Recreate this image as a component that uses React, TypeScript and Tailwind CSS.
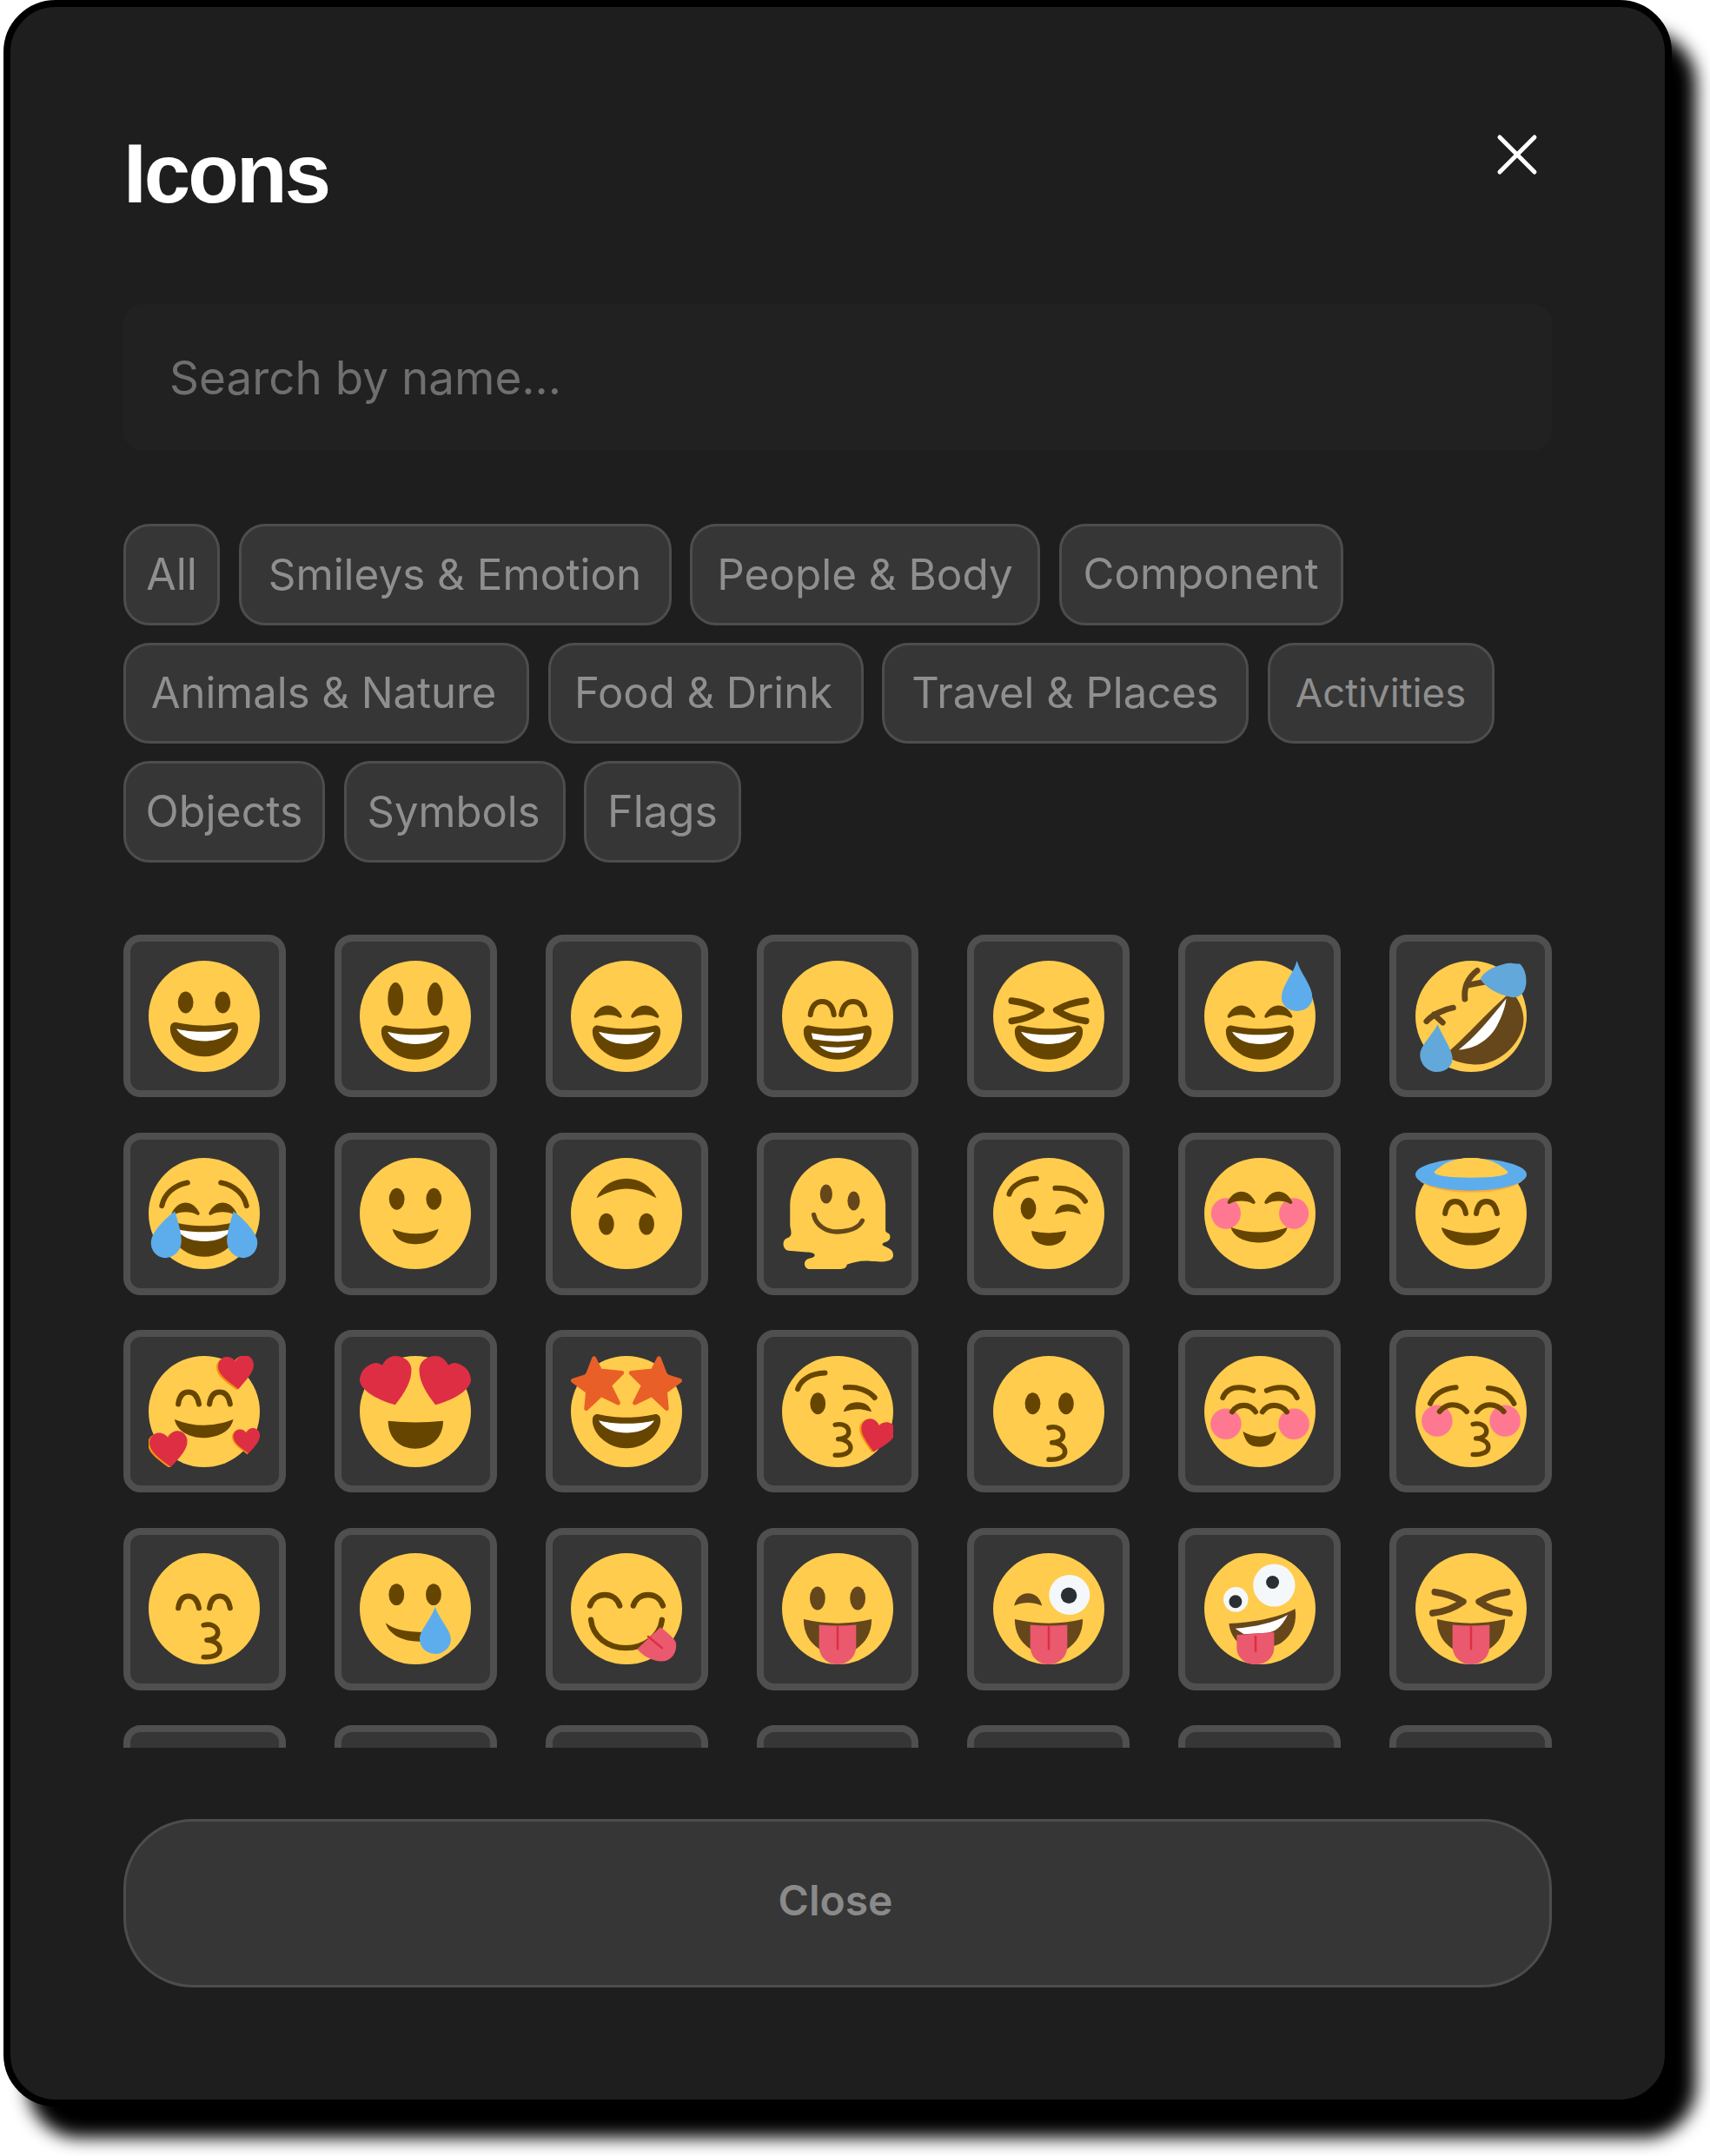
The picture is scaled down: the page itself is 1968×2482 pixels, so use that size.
import { X } from 'lucide-react';
import type { ReactNode } from 'react';

const BROWN = '#664500';
const DARK = '#65471B';
const RED = '#DD2E44';
const BLUE = '#5DADEC';
const PINK = '#FF7892';
const TONGUE = '#EA596E';

const MOUTH =
  'M18 21c-3.623 0-6.027-.422-9-1-.679-.131-2 0-2 2 0 4 4.595 9 11 9 6.404 0 11-5 11-9 0-2-1.321-2.132-2-2-2.973.578-5.377 1-9 1z';
const TEETH = 'M9 22s3 1 9 1 9-1 9-1-2 4-9 4-9-4-9-4z';
const SMILE_EYES =
  'M28.457 17.797c-.06-.135-1.499-3.297-4.457-3.297-2.957 0-4.397 3.162-4.457 3.297-.092.207-.032.449.145.591.175.142.426.147.61.014.012-.009 1.262-.902 3.702-.902 2.426 0 3.674.881 3.702.901.088.066.194.099.298.099.11 0 .221-.037.312-.109.177-.142.238-.386.145-.594zm-12 0c-.06-.135-1.499-3.297-4.457-3.297-2.957 0-4.397 3.162-4.457 3.297-.092.207-.032.449.144.591.176.142.427.147.61.014.013-.009 1.262-.902 3.703-.902 2.426 0 3.674.881 3.702.901.088.066.194.099.298.099.11 0 .221-.037.312-.109.178-.142.237-.386.145-.594z';
const HEART =
  'M12 21C5 15 0 11 0 6 0 2.5 3 0 6 0c2.5 0 5 1.5 6 3.5C13 1.5 15.5 0 18 0c3 0 6 2.5 6 6 0 5-5 9-12 15z';

function Face() {
  return <circle cx="18" cy="18" r="18" fill="#FFCC4D" />;
}

function Eyes({ l = 12, r = 24, y = 13.5, rx = 2.5, ry = 3.5, c = BROWN }) {
  return (
    <>
      <ellipse cx={l} cy={y} rx={rx} ry={ry} fill={c} />
      <ellipse cx={r} cy={y} rx={rx} ry={ry} fill={c} />
    </>
  );
}

function Line({ d, w = 1.7, c = BROWN }: { d: string; w?: number; c?: string }) {
  return <path d={d} fill="none" stroke={c} strokeWidth={w} strokeLinecap="round" strokeLinejoin="round" />;
}

function Smile({ y = 0, teeth = true }: { y?: number; teeth?: boolean }) {
  return (
    <g transform={`translate(0 ${y})`}>
      <path d={MOUTH} fill={BROWN} />
      {teeth && <path d={TEETH} fill="#fff" />}
    </g>
  );
}

function SmileEyes({ y = 0 }: { y?: number }) {
  return <path d={SMILE_EYES} fill={BROWN} transform={`translate(0 ${y})`} />;
}

function ArchEyes({ y = 0 }: { y?: number }) {
  return (
    <g transform={`translate(0 ${y})`}>
      <Line d="M9.6 17.3C10 14.4 11.4 13.4 12.9 13.4s2.9 1 3.4 3.9" />
      <Line d="M19.7 17.3c.4-2.9 1.8-3.9 3.3-3.9s2.9 1 3.4 3.9" />
    </g>
  );
}

function Crescent({ x1, x2, y, h }: { x1: number; x2: number; y: number; h: number }) {
  const mid = (x1 + x2) / 2;
  const dip = h * 0.4;
  return <path d={`M${x1} ${y}Q${mid} ${y + dip * 1.6} ${x2} ${y}C${x2 - 1} ${y + h * 0.8} ${mid + 3} ${y + h} ${mid} ${y + h}S${x1 + 1} ${y + h * 0.8} ${x1} ${y}z`} fill={BROWN} />;
}

function Lips({ x = 18, y = 22, s = 1 }: { x?: number; y?: number; s?: number }) {
  return (
    <g transform={`translate(${x} ${y}) scale(${s})`}>
      <Line d="M0 0.4C2.5-.3 4.4 1 4.4 2.7 4.4 4.3 2.5 5 1 5 2.7 5 5 6 5 7.8 5 9.6 2.5 10.4 0 10.2" w={1.5} />
    </g>
  );
}

function Cross({ left = [6, 13, 15.5, 16, 6, 19.5], w = 2.2, c = BROWN }: { left?: number[]; w?: number; c?: string }) {
  const [a, b, m, d, e, f] = left;
  return (
    <>
      <Line d={`M${a} ${b}Q${(a + m) / 2 + 0.6} ${b + 0.6} ${m} ${d}Q${(e + m) / 2 + 0.6} ${f - 0.6} ${e} ${f}`} w={w} c={c} />
      <Line d={`M${36 - a} ${b}Q${36 - (a + m) / 2 - 0.6} ${b + 0.6} ${36 - m} ${d}Q${36 - (e + m) / 2 - 0.6} ${f - 0.6} ${36 - e} ${f}`} w={w} c={c} />
    </>
  );
}

function Heart({ x, y, s, r = 0 }: { x: number; y: number; s: number; r?: number }) {
  return (
    <g transform={`translate(${x} ${y}) rotate(${r}) scale(${s} ${s * 1.07})`}>
      <path d={HEART} fill="#F4900C" transform="translate(-1.2 .5)" />
      <path d={HEART} fill={RED} />
    </g>
  );
}

function TongueMouth({ x = 12, w = 12 }: { x?: number; w?: number }) {
  return (
    <>
      <path d="M7 21.4Q18 24 29 21.4C29 26 27 29 24 31L12 31C9 29 7 26 7 21.4z" fill={DARK} />
      <path d={`M${x} 23.2Q${x + w / 2} 23.8 ${x + w} 23.2V30C${x + w} 33.8 ${x + w - 3} 36 ${x + w / 2} 36S${x} 33.8 ${x} 30z`} fill={TONGUE} />
      <Line d={`M${x + w / 2} 24V31`} w={0.7} c={RED} />
    </>
  );
}

function Drop({ d, c = BLUE }: { d: string; c?: string }) {
  return <path d={d} fill={c} />;
}

const emojis: ReactNode[] = [
  // row 1
  <><Face /><Eyes /><Smile /></>,
  <><Face /><Eyes l={11.6} r={24.4} y={12.4} ry={5.4} /><Smile y={1} /></>,
  <><Face /><SmileEyes /><Smile y={1} /></>,
  <>
    <Face />
    <Line d="M9.2 17.5C9.6 14.4 11.2 13.2 13 13.2s3.4 1.2 3.8 4.3" />
    <Line d="M19.2 17.5c.4-3.1 2-4.3 3.8-4.3s3.4 1.2 3.8 4.3" />
    <path transform="translate(0 1)" d={MOUTH} fill={BROWN} />
    <path d="M9.5 23.4Q18 25.2 26.5 23.4L26 25.4Q18 27 10 25.4z" fill="#fff" />
    <path d="M12 27.5Q18 28.6 24 27.5Q22 29.8 18 29.8T12 27.5z" fill="#fff" />
  </>,
  <><Face /><Cross /><Smile y={1} /></>,
  <>
    <Face />
    <SmileEyes />
    <Smile y={1} />
    <Drop d="M30 0c1 4 5 8 5 12a5 4.3 0 0 1-10 0c0-4 4-8 5-12z" />
  </>,
  <>
    <Face />
    <path d="M32 11C35 15 35.5 19 34.6 22 33 28 26 34 19 33.6 15.5 33.4 12 32.4 10.5 31L11.4 28.8C15 26 22 18 29.4 11.4z" fill={DARK} />
    <path d="M29.4 12.2C29 16 27 20 26 21.7 24 25 20 28.5 14 28.8 19 25 24 19 29.4 12.2z" fill="#fff" />
    <Line d="M20 3.2C17 5.5 15.6 8.5 16 12.4M16.5 8L24 6.5" w={1.9} c={DARK} />
    <Line d="M12.2 15.2C9 15.8 5.5 17.5 3.6 19.6M6 17.4L8.8 20" w={1.9} c={DARK} />
    <path d="M21 6C22 3.5 25 2 29 1c1-.5 3 0 4.8 0C36 3 36.2 7 35.5 9c-.8 2.5-3 3.2-5 2.7C27 11 23 9 21 6z" fill="#62A8DB" />
    <path d="M7.2 20.6C8 23 12 29 12 31.5 12 34.5 9.5 36 7 36 4 36 1.5 33.5 1.5 30.5 1.5 27.5 5.5 24 7.2 20.6z" fill="#62A8DB" />
  </>,
  // row 2
  <>
    <Face />
    <Line d="M4.3 15.5C5 12 8 8.8 12.6 8" />
    <Line d="M31.7 15.5C31 12 28 8.8 23.4 8" />
    <SmileEyes />
    <path transform="translate(0 1)" d={MOUTH} fill={BROWN} />
    <path transform="translate(0 1)" d={TEETH} fill="#fff" />
    <Drop d="M8.5 17.3C10 22 11 26 10.5 28 10 31 7 32.8 4.5 32.3 1.5 31.5.2 28.5 1 26 2 23 6 19 8.5 17.3z" />
    <g transform="matrix(-1 0 0 1 36 0)">
      <Drop d="M8.5 17.3C10 22 11 26 10.5 28 10 31 7 32.8 4.5 32.3 1.5 31.5.2 28.5 1 26 2 23 6 19 8.5 17.3z" />
    </g>
  </>,
  <><Face /><Eyes y={13.3} /><Crescent x1={10.6} x2={25.5} y={23} h={4.9} /></>,
  <>
    <Face />
    <path d="M8.3 13C10 9 14 6.7 18 6.7S26 9 27.7 13C24 11 21 10 18 10S12 11 8.3 13z" fill={BROWN} />
    <Eyes l={11.5} r={24.5} y={21.4} />
  </>,
  <>
    <path
      d="M18 0C26 0 33 7 33.5 15L33.5 23.5C33.5 24.5 35 24 35 25.5 35 27.5 32.5 27 32.5 28 32.5 29 36 28.8 36 31.5 36 33.5 33 33.8 30 33.5 26 33 24 33.5 21 34.5 21 36 19 36 18 36L9 36C7 36 6.5 33 9 32.5 11.5 32 11 30.5 8 30.5L2 30C0 29.5 0 26.5 1.5 26 3.5 25.5 3 24 2.6 22L2.6 15C3 7 10 0 18 0z"
      fill="#FFCC4D"
    />
    <ellipse cx="14.3" cy="11.7" rx="2" ry="3.1" fill={DARK} />
    <ellipse cx="23.2" cy="13.9" rx="2" ry="3.1" fill={DARK} />
    <Line d="M10.3 18.4C11 22 14.5 24 18 23.9 22 23.8 25 22.5 26 20.3" w={1.5} c={DARK} />
  </>,
  <>
    <Face />
    <Line d="M5.2 11.7C6 9 9.5 6.8 14 6.7" />
    <ellipse cx="11.4" cy="16.4" rx="2.5" ry="3.5" fill={BROWN} />
    <Line d="M20.1 9.8C24 9.6 28 11 29.8 14" />
    <path d="M20 18.3C20.6 16 22 15 24.2 15S27.8 16 28.4 18.3C26.5 17.6 25 17.3 24.2 17.3S21.9 17.6 20 18.3z" fill={BROWN} />
    <path d="M12.4 23.6Q18 25 23.6 23.6C23.5 26.5 21 28.4 18 28.4S12.5 26.5 12.4 23.6z" fill={BROWN} />
  </>,
  <>
    <Face />
    <ellipse cx="7" cy="18" rx="4.8" ry="5" fill={PINK} />
    <ellipse cx="29" cy="18" rx="4.8" ry="5" fill={PINK} />
    <SmileEyes y={-3.6} />
    <Crescent x1={8.6} x2={26.9} y={22.5} h={4.9} />
  </>,
  <>
    <Face />
    <ellipse cx="18" cy="6.2" rx="17" ry="5" fill="#FFAC33" />
    <ellipse cx="18" cy="5.4" rx="18" ry="5.2" fill={BLUE} />
    <path d="M6 4.6C8.5 2 12 0 18 0S27.5 2 30 4.6C29.5 6 24 6.4 18 6.4S6.5 6 6 4.6z" fill="#FFCC4D" />
    <ArchEyes y={.7} />
    <Crescent x1={8.4} x2={27.4} y={22.5} h={5.8} />
  </>,
  // row 3
  <>
    <Face />
    <ArchEyes y={-1.7} />
    <Crescent x1={8.4} x2={27.4} y={20.5} h={6} />
    <Heart x={22.2} y={0.6} s={0.48} r={-6} />
    <Heart x={0} y={25.2} s={0.51} r={-6} />
    <Heart x={27.2} y={24} s={0.36} r={-6} />
  </>,
  <>
    <Face />
    <path d="M9.2 21Q18 22 27 21C27 27 22.5 30 18 30S9.2 27 9.2 21z" fill={BROWN} />
    <path d="M16.7 4C16.4 1.5 14 0 11.5 0 9.5 0 8 1.5 7.3 3 6 2 4.5 2 3 3 1 4 0 6 0 8 .5 11 5 14 11.5 15.8 14.5 12 17 8 16.7 4z" fill={RED} />
    <path d="M16.7 4C16.4 1.5 14 0 11.5 0 9.5 0 8 1.5 7.3 3 6 2 4.5 2 3 3 1 4 0 6 0 8 .5 11 5 14 11.5 15.8 14.5 12 17 8 16.7 4z" fill={RED} transform="matrix(-1 0 0 1 36 0)" />
  </>,
  <>
    <Face />
    <Smile y={-1.1} />
    <path d="M7.5.8L9.5 4.8 16.5 5.5 12.5 9.5 15.3 15.2 9.8 12.5 5 17 5.5 11.5.7 8 5.3 6.5z" fill="#E95F28" stroke="#E95F28" strokeWidth="1.4" strokeLinejoin="round" />
    <path d="M7.5.8L9.5 4.8 16.5 5.5 12.5 9.5 15.3 15.2 9.8 12.5 5 17 5.5 11.5.7 8 5.3 6.5z" fill="#E95F28" stroke="#E95F28" strokeWidth="1.4" strokeLinejoin="round" transform="matrix(-1 0 0 1 36 0)" />
  </>,
  <>
    <Face />
    <Line d="M5.1 10.7C6 8 9 5.6 13.9 5.5" />
    <ellipse cx="11.6" cy="15.4" rx="2.5" ry="3.5" fill={BROWN} />
    <Line d="M20.5 10.2C24 9.8 28 11 30 13.5" />
    <path d="M19.9 18.1C20.5 16 22 15 24.4 15S28.4 16 29 18.1C27 17.4 25.4 17.2 24.4 17.2S21.9 17.4 19.9 18.1z" fill={BROWN} />
    <Lips x={17.2} y={21.9} s={1} />
    <Heart x={26.4} y={19.8} s={0.46} r={12} />
  </>,
  <><Face /><Eyes l={12.8} r={23.6} y={15.4} /><Lips x={18} y={22.8} s={1.05} /></>,
  <>
    <Face />
    <ellipse cx="7" cy="22" rx="5" ry="5" fill={PINK} />
    <ellipse cx="29" cy="22" rx="5" ry="5" fill={PINK} />
    <Line d="M6 13.5C7 11 9 10.2 11.3 10.2S14.5 10.6 15.8 11.2" />
    <Line d="M30 13.5C29 11 27 10.2 24.7 10.2S21.5 10.6 20.2 11.2" />
    <Line d="M9 18.1C10 16.6 11.5 16 12.8 16S15.6 16.6 16.6 18.1" />
    <Line d="M18.8 18.1C19.8 16.6 21.3 16 22.6 16S25.7 16.6 26.7 18.1" />
    <Crescent x1={12.5} x2={23.3} y={24.5} h={4.9} />
  </>,
  <>
    <Face />
    <ellipse cx="7" cy="21" rx="5" ry="5.1" fill={PINK} />
    <ellipse cx="29" cy="21" rx="5" ry="5.1" fill={PINK} />
    <Line d="M4.8 15.4C6 12.5 9 10.5 13.1 10.2" />
    <Line d="M31.9 15.4C30.5 12.5 27.6 10.7 23.6 10.4" />
    <Line d="M7.8 18C9 16.5 10.5 15.8 12 15.8S15.4 16.5 16.6 18" />
    <Line d="M19.9 18C21 16.5 22.5 15.8 24 15.8S27.4 16.5 28.6 18" />
    <Lips x={18.6} y={21.7} s={1} />
  </>,
  // row 4
  <><Face /><ArchEyes y={.5} /><Lips x={17.8} y={22.9} s={1.05} /></>,
  <>
    <Face />
    <Eyes l={11.9} r={23.9} y={13.4} />
    <path d="M8.4 22.6C11 24.8 15 25.6 21 25.6L20 28.6C14 28.8 9.5 26.5 8.4 22.6z" fill={BROWN} />
    <Drop d="M24.4 17.4C25.5 21 29.5 25 29.5 27.8 29.5 30.6 27.2 32.6 24.4 32.6S19.4 30.6 19.4 27.8C19.4 25 23.4 21 24.4 17.4z" />
  </>,
  <>
    <Face />
    <Line d="M6.2 17C7 14.5 9 13.5 11 13.5S15 14.5 15.8 17" w={1.8} />
    <Line d="M20.2 17C21 14.5 23 13.5 25 13.5S29 14.5 29.8 17" w={1.8} />
    <Line d="M6.5 21.6C7 27 12 30.7 17.8 30.7S28.8 27 29.5 21.6" w={1.8} />
    <path d="M29 24L21.5 31C23 33 26 35 29.5 35 33 35 34.5 31.5 34 29 33.5 27.5 31 25.5 29 24z" fill={TONGUE} />
    <Line d="M25 27L29.5 30.7" w={0.7} c={RED} />
  </>,
  <><Face /><Eyes l={11.5} r={24.5} y={14.6} ry={3.8} c={DARK} /><TongueMouth /></>,
  <>
    <Face />
    <path d="M6.8 17C7.4 14.5 9 13 11.3 13S15.2 14.5 15.8 17C14 16.2 12.5 16 11.3 16S8.6 16.2 6.8 17z" fill={DARK} />
    <ellipse cx="24.7" cy="13.5" rx="6.6" ry="6.5" fill="#F5F8FA" />
    <circle cx="24.5" cy="13.7" r="2.6" fill="#292F33" />
    <TongueMouth />
  </>,
  <>
    <Face />
    <circle cx="10.2" cy="15" r="4" fill="#F5F8FA" />
    <circle cx="10.1" cy="15.7" r="2.1" fill="#292F33" />
    <ellipse cx="22.6" cy="10.4" rx="6.8" ry="6.9" fill="#F5F8FA" />
    <circle cx="22.1" cy="9.4" r="2.1" fill="#292F33" />
    <path d="M8 22.8C15 22.5 24 21 29.4 18 30 22 29 26 25 29 22 31 14 32 11 29 9 27 8.2 25 8 22.8z" fill={DARK} />
    <path d="M10 24.4C16 24 23 22.5 27 20 25 24 23 25.5 20.3 25.8L12.8 26.2z" fill="#fff" />
    <path d="M10.5 26.5Q16.5 26 22.6 25.6V30.5C22.6 33.8 20 36 16.6 36S10.5 33.8 10.5 30.5z" fill={TONGUE} />
    <Line d="M16.6 27V31.7" w={0.7} c={RED} />
  </>,
  <><Face /><Cross left={[6.3, 12.6, 15.4, 15.7, 5.6, 19.4]} c={DARK} /><TongueMouth /></>,
];

const chips = [
  { label: 'All', cls: 'w-[111px] text-[50px]' },
  { label: 'Smileys & Emotion', cls: 'w-[498px] text-[49.4px]' },
  { label: 'People & Body', cls: 'w-[403px] text-[49.4px]' },
  { label: 'Component', cls: 'w-[327px] text-[49.2px]' },
  { label: 'Animals & Nature', cls: 'w-[467px] pr-[6px] text-[49px]' },
  { label: 'Food & Drink', cls: 'w-[363px] pr-[5px] text-[49px]' },
  { label: 'Travel & Places', cls: 'w-[422px] text-[49px]' },
  { label: 'Activities', cls: 'w-[261px] text-[45.5px]' },
  { label: 'Objects', cls: 'w-[232px] text-[50px]' },
  { label: 'Symbols', cls: 'w-[255px] pr-[2px] text-[49px]' },
  { label: 'Flags', cls: 'w-[181px] text-[50px]' },
];

function Tile({ children }: { children?: ReactNode }) {
  return (
    <div className="flex h-[187px] items-center justify-center rounded-[20px] border-8 border-[#4f4f4f] bg-[#363636]">
      {children && (
        <svg viewBox="0 0 36 36" className="h-[128px] w-[128px]">
          {children}
        </svg>
      )}
    </div>
  );
}

export default function App() {
  return (
    <div className="min-h-[2482px] bg-white pl-[4px] font-[Inter,sans-serif]">
      <div className="w-[1920px] h-[2425px] rounded-[60px] border-8 border-black bg-[#1e1e1e] px-[130px] pt-[130px] shadow-[28px_36px_20px_#000]">
        <div className="flex h-[124px] items-start justify-between">
          <h1 className="font-['Liberation_Sans',sans-serif] text-[96px] leading-[124px] font-bold tracking-[-0.03em] text-white">Icons</h1>
          <button className="text-white">
            <X size={80} strokeWidth={1.5} />
          </button>
        </div>

        <input
          type="text"
          placeholder="Search by name..."
          className="mt-[88px] block h-[169px] w-full rounded-[22px] bg-[#212121] pl-[53px] text-[53px] text-white outline-none placeholder:text-[#6f6f6f]"
        />

        <div className="mt-[84px] flex flex-wrap gap-x-[21.5px] gap-y-[20px]">
          {chips.map((c) => (
            <button
              key={c.label}
              className={`flex h-[116.7px] items-center justify-center rounded-[30px] border-[3.5px] border-[#4d4d4d] bg-[#363636] text-[#8f8f8f] ${c.cls}`}
            >
              {c.label}
            </button>
          ))}
        </div>

        <div className="mt-[83px] h-[936px] overflow-hidden">
          <div className="grid grid-cols-7 gap-x-[56px] gap-y-[40.5px]">
            {emojis.map((e, i) => (
              <Tile key={i}>{e}</Tile>
            ))}
            {[0, 1, 2, 3, 4, 5, 6].map((i) => (
              <Tile key={`blank-${i}`} />
            ))}
          </div>
        </div>

        <button className="mt-[82px] block h-[194px] w-full rounded-[80px] border-[3.5px] border-[#4d4d4d] bg-[#363636] pr-[5px] pb-[6px] text-[48px] font-semibold text-[#8a8a8a]">
          Close
        </button>
      </div>
    </div>
  );
}
